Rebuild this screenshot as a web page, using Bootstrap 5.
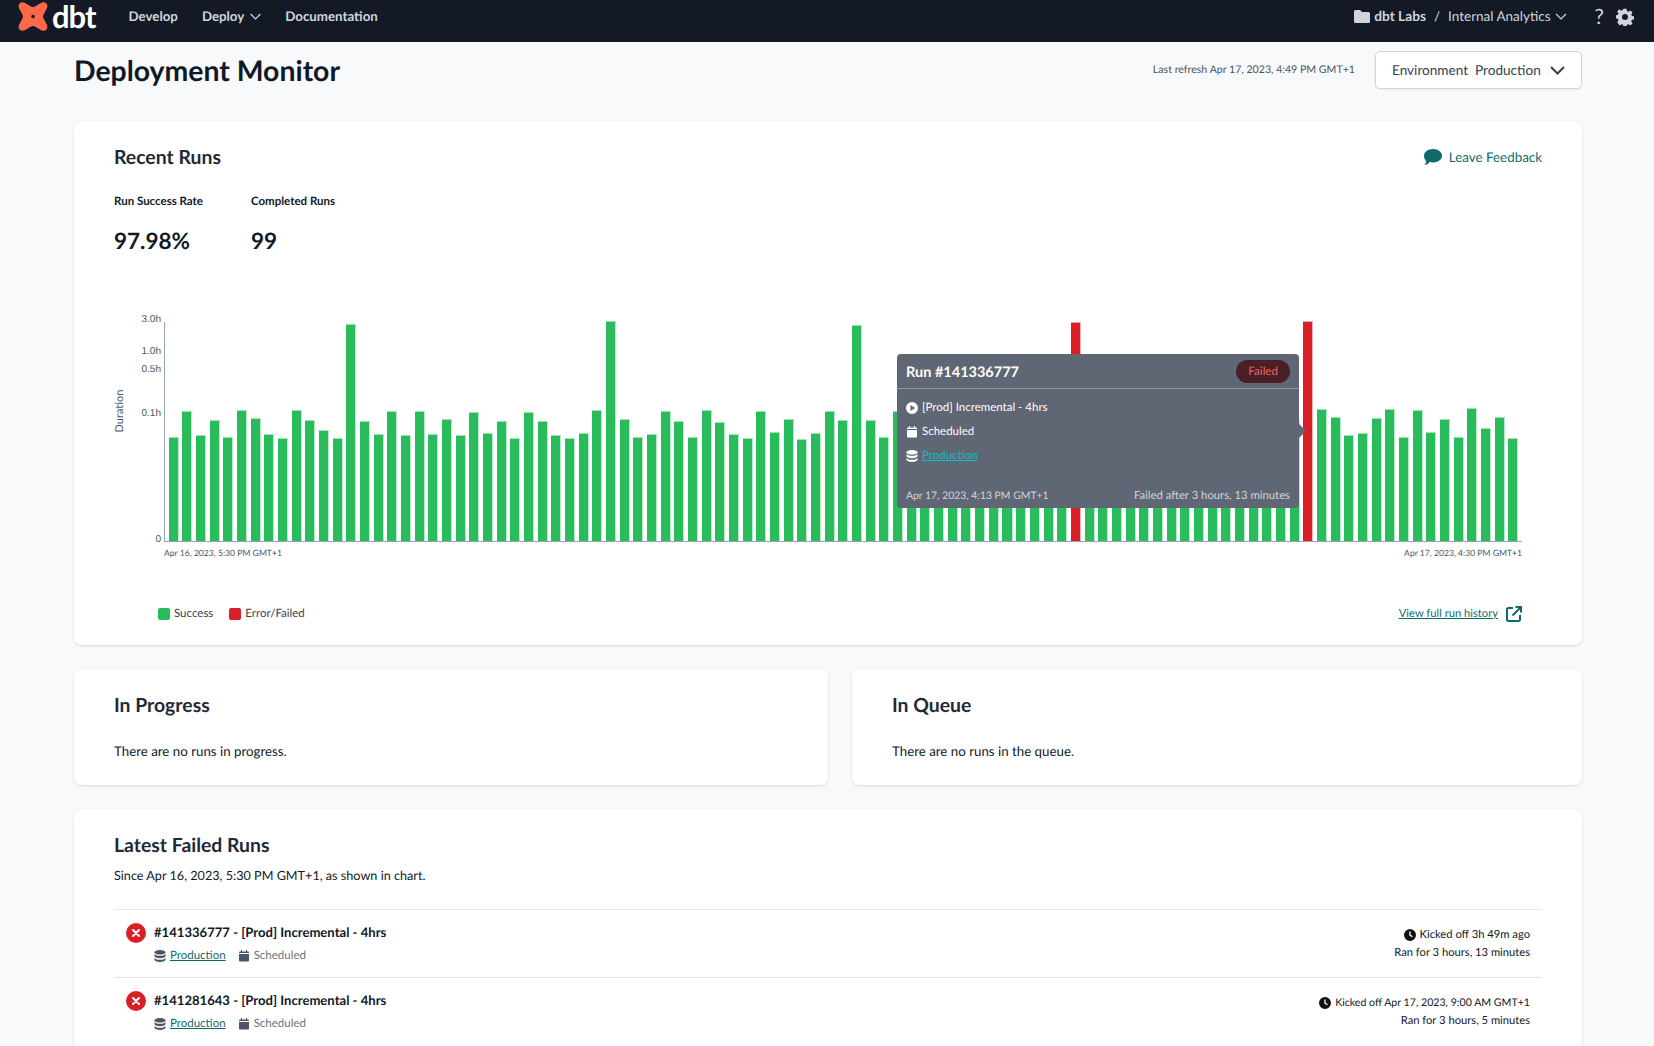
<!DOCTYPE html>
<html lang="en">
<head>
<meta charset="utf-8">
<title>Deployment Monitor</title>
<link href="https://cdn.jsdelivr.net/npm/bootstrap@5.3.0/dist/css/bootstrap.min.css" rel="stylesheet">
<style>
html,body{height:1046px;overflow:hidden}
body{background:#f8f9fb;font-family:"Lato","Liberation Sans",sans-serif;color:#111827;font-size:13.5px;text-rendering:geometricPrecision}
.top-bar{height:42px;background:#131a26;padding:0 20px 9px 17px}
.brand-word{font-size:31px;font-weight:700;color:#fff;line-height:1;letter-spacing:-1px;margin-left:3px}
.top-link{font-size:13.3px;font-weight:700;color:#d1d5db;text-decoration:none;display:inline-flex;align-items:center;gap:6px}
.top-links{margin-left:33px;gap:24px}
.org-name{font-size:13.7px;font-weight:700;color:#d1d5db}
.proj-name{font-size:13.5px;color:#d1d5db}
.help-mark{font-size:21px;line-height:1;color:#d1d5db;margin-left:28px;margin-right:12px}
.page-wrap{padding:0 72px 0 74px}
.head-row{height:56px;margin-bottom:23px}
.page-title{font-size:28.4px;font-weight:700;color:#111827;margin:0;padding-top:3px}
.refresh-note{font-size:10.6px;color:#4b5563;margin-right:20px;padding-top:2px}
.env-select{width:207px;height:38px;background:#fff;border:1px solid #cfd3da;border-radius:5px;padding:0 16px;font-size:13.6px;color:#374151;box-shadow:0 1px 2px rgba(0,0,0,.05)}
.panel{background:#fff;border:0;border-radius:8px;box-shadow:0 1px 3px rgba(17,24,39,.12);padding:0 40px;margin-bottom:24px}
.panel-main{height:524px;padding-top:24px}
.panel-small{height:116px;padding-top:24px}
.panel-fail{height:300px;padding-top:24px;margin-bottom:0}
.panel-title{font-size:19.4px;font-weight:700;color:#1f2937;margin:0;line-height:26px}
.feedback{font-size:13.4px;color:#0f6b6b;text-decoration:none;display:inline-flex;align-items:center;gap:7px;margin-bottom:2px}
.metric-label{font-size:11.5px;font-weight:700;color:#111827;line-height:16px}
.metric-value{font-size:22.5px;font-weight:700;color:#111827;line-height:30px;margin-top:16px}
.metric-one{width:137px}
.metrics{margin-top:23px}
.chart-area{position:relative;height:283px;margin-top:62px}
.y-title{position:absolute;left:-19px;top:86px;font-size:11px;color:#4b5563;transform:rotate(-90deg);width:50px;text-align:center;line-height:14px}
.y-tick{position:absolute;font:10px "Liberation Sans",sans-serif;color:#4b5563;right:1381px;line-height:12px}
.plot{position:absolute;left:50px;top:4px;width:1358px;height:220px;border-left:1px solid #9ca3af;border-bottom:1px solid #9ca3af;padding:0 4px 0 3.5px;gap:3.67px}
.bar-ok,.bar-err{flex:1 1 0;min-width:0;border-top:1px solid #9fe3b5;border-right:1px solid #b4ebc6;background:#2abb5c}
.bar-err{background:#d92027;border-top-color:#eda3a6;border-right-color:#f0b4b6}
.x-tick{position:absolute;top:229px;font-size:8.6px;color:#4b5563;line-height:12px}
.tip-box{position:absolute;left:783px;top:36px;width:402px;height:154px;background:#5f6674;border-radius:4px;color:#fff;padding:0 9px;font-size:11.5px}
.tip-box::after{content:"";position:absolute;right:-7px;top:70px;border-style:solid;border-width:7px 0 7px 7px;border-color:transparent transparent transparent #5f6674}
.tip-head{height:35px;margin:0 -9px;padding:0 9px;border-bottom:1px solid #9096a2}
.tip-run{font-size:14.5px;font-weight:700;padding-top:3px}
.tip-state{background:#4a1f27;color:#f0636a;border-radius:12px;padding:0 12px;font-size:11.6px;line-height:23px;height:23px}
.tip-line{height:24px;gap:4px;font-size:11.5px}
.tip-rows{padding-top:6.5px}
.tip-link{color:#10bfc5}
.tip-foot{position:absolute;left:9px;right:9px;bottom:3px;color:#d1d5db;font-size:11.3px}
.tip-date{font-size:10.4px}
.chart-foot{padding:1px 20px 0 44px;height:24px}
.legend-dot{width:12px;height:12px;border-radius:2px;display:inline-block}
.dot-ok{background:#2abb5c}
.dot-err{background:#d92027}
.legend-item{font-size:11.5px;color:#374151;gap:4px;margin-right:16px}
.hist-link{font-size:11.2px;color:#0f6b6b;padding-top:2px}
.body-text{font-size:13.3px;color:#111827;margin:0}
.small-body{margin-top:22px;line-height:20px}
.fail-sub{margin-top:7px;line-height:20px;font-size:12.65px}
.fail-list{margin-top:22.5px}
.fail-row{height:68.8px;border-top:1px solid #e5e7eb;padding:12px 12px 0 12px}
.fail-name{font-size:13.1px;font-weight:700;color:#111827;line-height:20px}
.fail-meta{font-size:11.5px;color:#6b7280;line-height:16px;margin-top:6px;gap:12px}
.fail-meta a{color:#0f6b6b}
.fail-right{font-size:11.2px;color:#111827;line-height:18px;text-align:right;padding-top:4px}
.fail-date{font-size:10.6px}
.fail-x{width:20px;height:20px;margin-right:8px;margin-top:1px}
.col-wide{width:754px;flex:none}
</style>
</head>
<body>
<nav class="top-bar d-flex align-items-center">
  <svg width="32" height="32" viewBox="0 0 32 32" aria-hidden="true"><path fill="#ff694a" d="M3 2C4.600.8 6.600 1.200 8.600 2.200L14 5.400C15.200 6.100 16.800 6.100 18 5.400L23.400 2.200C25.400 1.200 27.400.8 29 2C30.600 3.600 30.800 5.600 29.800 7.600L26.600 13.400C25.900 14.800 25.900 16.200 26.600 17.600L29.800 23.400C30.800 25.400 30.600 27.400 29 29C27.400 30.200 25.400 29.800 23.400 28.800L18 25.600C16.800 24.900 15.200 24.900 14 25.600L8.600 28.800C6.600 29.800 4.600 30.200 3 29C1.400 27.400 1.200 25.400 2.200 23.400L5.400 17.600C6.100 16.200 6.100 14.800 5.400 13.400L2.200 7.600C1.200 5.600 1.400 3.600 3 2Z"/><circle cx="16" cy="15.500" r="1.800" fill="#131a26"/></svg>
  <span class="brand-word">dbt</span>
  <div class="top-links d-flex align-items-center">
    <a class="top-link" href="#">Develop</a>
    <a class="top-link" href="#">Deploy <svg width="11" height="7" viewBox="0 0 11 7"><path d="M.6 1l4.900 4.900L10.400 1" fill="none" stroke="#d1d5db" stroke-width="1.200"/></svg></a>
    <a class="top-link" href="#">Documentation</a>
  </div>
  <div class="ms-auto d-flex align-items-center">
    <svg width="16" height="13" viewBox="0 0 16 13" class="me-1"><path fill="#d1d5db" d="M1.500 0h4.500l2 2h6.500A1.500 1.500 0 0 1 16 3.500v8A1.500 1.500 0 0 1 14.500 13h-13A1.500 1.500 0 0 1 0 11.500v-10A1.500 1.500 0 0 1 1.500 0z"/></svg>
    <span class="org-name">dbt Labs</span>
    <span class="proj-name mx-2">/</span>
    <span class="proj-name">Internal Analytics</span>
    <svg width="12" height="7" viewBox="0 0 11 7" class="ms-1"><path d="M.6 1l4.900 4.900L10.400 1" fill="none" stroke="#d1d5db" stroke-width="1.200"/></svg>
    <span class="help-mark">?</span>
    <svg width="18" height="18" viewBox="0 0 24 24"><path fill="#d1d5db" d="M10 1h4l.6 3 2 .9 2.600-1.700 2.800 2.800-1.700 2.600.9 2 3 .6v4l-3 .6-.9 2 1.700 2.600-2.800 2.800-2.600-1.700-2 .9-.6 3h-4l-.6-3-2-.9-2.600 1.700L1.600 19l1.700-2.600-.9-2-3-.6v-4l3-.6.9-2L1.600 4.600 4.400 1.800 7 3.500l2-.9zM12 8a4 4 0 1 0 0 8 4 4 0 0 0 0-8z"/></svg>
  </div>
</nav>
<main class="page-wrap">
  <div class="head-row d-flex align-items-center">
    <h1 class="page-title">Deployment Monitor</h1>
    <span class="refresh-note ms-auto">Last refresh Apr 17, 2023, 4:49 PM GMT+1</span>
    <div class="env-select d-flex align-items-center justify-content-between">
      <span>Environment&nbsp; Production</span>
      <svg width="15" height="9" viewBox="0 0 15 9"><path d="M1 1l6.500 6.500L14 1" fill="none" stroke="#374151" stroke-width="2"/></svg>
    </div>
  </div>
  <section class="panel panel-main">
    <div class="d-flex justify-content-between align-items-center">
      <h2 class="panel-title">Recent Runs</h2>
      <a class="feedback" href="#"><svg width="18" height="16" viewBox="0 0 18 16"><path fill="#0f6b6b" d="M9 0c5 0 9 2.900 9 6.700s-4 6.700-9 6.700c-1.200 0-2.300-.2-3.400-.5C4.400 14.500 2.400 16 .4 16c.9-1 1.700-2.300 1.800-4C.8 10.800 0 8.800 0 6.700 0 2.900 4 0 9 0z"/></svg>Leave Feedback</a>
    </div>
    <div class="metrics d-flex">
      <div class="metric-one"><div class="metric-label">Run Success Rate</div><div class="metric-value">97.98%</div></div>
      <div><div class="metric-label">Completed Runs</div><div class="metric-value">99</div></div>
    </div>
    <div class="chart-area">
      <div class="y-title">Duration</div>
      <div class="y-tick" style="top:-4px">3.0h</div>
      <div class="y-tick" style="top:28px">1.0h</div>
      <div class="y-tick" style="top:46px">0.5h</div>
      <div class="y-tick" style="top:90px">0.1h</div>
      <div class="y-tick" style="top:216px">0</div>
      <div class="plot d-flex align-items-end">
<i class="bar-ok" style="height:104.3px"></i><i class="bar-ok" style="height:129.7px"></i><i class="bar-ok" style="height:106px"></i><i class="bar-ok" style="height:121px"></i><i class="bar-ok" style="height:103.7px"></i><i class="bar-ok" style="height:131px"></i><i class="bar-ok" style="height:123.3px"></i><i class="bar-ok" style="height:107px"></i><i class="bar-ok" style="height:103px"></i><i class="bar-ok" style="height:131px"></i>
<i class="bar-ok" style="height:121.3px"></i><i class="bar-ok" style="height:111px"></i><i class="bar-ok" style="height:102.7px"></i><i class="bar-ok" style="height:216.7px"></i><i class="bar-ok" style="height:120.3px"></i><i class="bar-ok" style="height:107px"></i><i class="bar-ok" style="height:130px"></i><i class="bar-ok" style="height:106px"></i><i class="bar-ok" style="height:130px"></i><i class="bar-ok" style="height:107px"></i>
<i class="bar-ok" style="height:121.7px"></i><i class="bar-ok" style="height:106px"></i><i class="bar-ok" style="height:129px"></i><i class="bar-ok" style="height:108.3px"></i><i class="bar-ok" style="height:120px"></i><i class="bar-ok" style="height:103px"></i><i class="bar-ok" style="height:128.7px"></i><i class="bar-ok" style="height:120.3px"></i><i class="bar-ok" style="height:106.3px"></i><i class="bar-ok" style="height:103.3px"></i>
<i class="bar-ok" style="height:107.7px"></i><i class="bar-ok" style="height:130.7px"></i><i class="bar-ok" style="height:220px"></i><i class="bar-ok" style="height:121.7px"></i><i class="bar-ok" style="height:104px"></i><i class="bar-ok" style="height:106.7px"></i><i class="bar-ok" style="height:130px"></i><i class="bar-ok" style="height:119.7px"></i><i class="bar-ok" style="height:104px"></i><i class="bar-ok" style="height:131px"></i>
<i class="bar-ok" style="height:119px"></i><i class="bar-ok" style="height:106.7px"></i><i class="bar-ok" style="height:103px"></i><i class="bar-ok" style="height:130px"></i><i class="bar-ok" style="height:109.3px"></i><i class="bar-ok" style="height:122px"></i><i class="bar-ok" style="height:102px"></i><i class="bar-ok" style="height:108px"></i><i class="bar-ok" style="height:130px"></i><i class="bar-ok" style="height:120.7px"></i>
<i class="bar-ok" style="height:216px"></i><i class="bar-ok" style="height:120.7px"></i><i class="bar-ok" style="height:103.7px"></i><i class="bar-ok" style="height:130.3px"></i><i class="bar-ok" style="height:110px"></i><i class="bar-ok" style="height:106px"></i><i class="bar-ok" style="height:120px"></i><i class="bar-ok" style="height:104px"></i><i class="bar-ok" style="height:125px"></i><i class="bar-ok" style="height:108px"></i>
<i class="bar-ok" style="height:112px"></i><i class="bar-ok" style="height:106px"></i><i class="bar-ok" style="height:118px"></i><i class="bar-ok" style="height:104px"></i><i class="bar-ok" style="height:128px"></i><i class="bar-ok" style="height:110px"></i><i class="bar-err" style="height:219px"></i><i class="bar-ok" style="height:107px"></i><i class="bar-ok" style="height:122px"></i><i class="bar-ok" style="height:105px"></i>
<i class="bar-ok" style="height:130px"></i><i class="bar-ok" style="height:109px"></i><i class="bar-ok" style="height:120px"></i><i class="bar-ok" style="height:104px"></i><i class="bar-ok" style="height:127px"></i><i class="bar-ok" style="height:111px"></i><i class="bar-ok" style="height:106px"></i><i class="bar-ok" style="height:124px"></i><i class="bar-ok" style="height:103px"></i><i class="bar-ok" style="height:118px"></i>
<i class="bar-ok" style="height:130px"></i><i class="bar-ok" style="height:108px"></i><i class="bar-ok" style="height:121px"></i><i class="bar-err" style="height:220px"></i><i class="bar-ok" style="height:132px"></i><i class="bar-ok" style="height:124px"></i><i class="bar-ok" style="height:106px"></i><i class="bar-ok" style="height:108.3px"></i><i class="bar-ok" style="height:123px"></i><i class="bar-ok" style="height:131.7px"></i>
<i class="bar-ok" style="height:104px"></i><i class="bar-ok" style="height:131px"></i><i class="bar-ok" style="height:108.7px"></i><i class="bar-ok" style="height:122px"></i><i class="bar-ok" style="height:104px"></i><i class="bar-ok" style="height:132.7px"></i><i class="bar-ok" style="height:113px"></i><i class="bar-ok" style="height:123.7px"></i><i class="bar-ok" style="height:103.3px"></i>
      </div>
      <div class="x-tick" style="left:50px">Apr 16, 2023, 5:30 PM GMT+1</div>
      <div class="x-tick" style="right:20px">Apr 17, 2023, 4:30 PM GMT+1</div>
      <div class="tip-box">
        <div class="tip-head d-flex align-items-center justify-content-between"><span class="tip-run">Run #141336777</span><span class="tip-state">Failed</span></div>
        <div class="tip-rows">
          <div class="tip-line d-flex align-items-center"><svg width="12" height="12" viewBox="0 0 12 12"><path fill="#fff" fill-rule="evenodd" d="M6 0a6 6 0 1 1 0 12A6 6 0 0 1 6 0zM4.500 3v6L9 6z"/></svg>[Prod] Incremental - 4hrs</div>
          <div class="tip-line d-flex align-items-center"><svg width="12" height="12" viewBox="0 0 12 12"><path fill="#fff" d="M1 4h10v6.500a1 1 0 0 1-1 1H2a1 1 0 0 1-1-1zM3 0h1v1.500h4V0h1v1.500h1a1 1 0 0 1 1 1V3H1v-.5a1 1 0 0 1 1-1h1z"/></svg>Scheduled</div>
          <div class="tip-line d-flex align-items-center"><svg width="12" height="12" viewBox="0 0 12 12"><g fill="#fff"><ellipse cx="6" cy="2.300" rx="5.500" ry="2.300"/><path d="M.5 4c1 1.300 3 1.800 5.500 1.800S10.500 5.300 11.500 4v2c0 1.300-2.500 2.200-5.500 2.200S.5 7.300.5 6z"/><path d="M.5 8c1 1.300 3 1.800 5.500 1.800S10.500 9.300 11.500 8v1.800C11.500 11 9 12 6 12S.5 11 .5 9.800z"/></g></svg><a class="tip-link" href="#">Production</a></div>
        </div>
        <div class="tip-foot d-flex justify-content-between align-items-center"><span class="tip-date">Apr 17, 2023, 4:13 PM GMT+1</span><span>Failed after 3 hours, 13 minutes</span></div>
      </div>
    </div>
    <div class="chart-foot d-flex align-items-center">
      <span class="legend-item d-inline-flex align-items-center"><i class="legend-dot dot-ok"></i>Success</span>
      <span class="legend-item d-inline-flex align-items-center"><i class="legend-dot dot-err"></i>Error/Failed</span>
      <a class="hist-link ms-auto" href="#">View full run history</a>
      <svg width="16" height="16" viewBox="0 0 16 16" class="ms-2"><path fill="none" stroke="#0f6b6b" stroke-width="2" d="M7 2H2.500A1.500 1.500 0 0 0 1 3.500v10A1.500 1.500 0 0 0 2.500 15h10a1.500 1.500 0 0 0 1.500-1.500V9M6.500 9.500L15 1M9.500 1H15v5.500"/></svg>
    </div>
  </section>
  <div class="d-flex gap-4">
    <div class="col-wide"><section class="panel panel-small"><h2 class="panel-title">In Progress</h2><p class="body-text small-body">There are no runs in progress.</p></section></div>
    <div class="flex-grow-1"><section class="panel panel-small"><h2 class="panel-title">In Queue</h2><p class="body-text small-body">There are no runs in the queue.</p></section></div>
  </div>
  <section class="panel panel-fail">
    <h2 class="panel-title">Latest Failed Runs</h2>
    <p class="body-text fail-sub">Since Apr 16, 2023, 5:30 PM GMT+1, as shown in chart.</p>
    <div class="fail-list">
      <div class="fail-row d-flex">
        <svg class="fail-x" viewBox="0 0 20 20"><circle cx="10" cy="10" r="10" fill="#d92027"/><path d="M7 7l6 6M13 7l-6 6" stroke="#fff" stroke-width="2" stroke-linecap="round"/></svg>
        <div><div class="fail-name">#141336777 - [Prod] Incremental - 4hrs</div>
          <div class="fail-meta d-flex align-items-center"><span class="d-inline-flex align-items-center gap-1"><svg width="12" height="12" viewBox="0 0 12 12"><g fill="#4b5563"><ellipse cx="6" cy="2.300" rx="5.500" ry="2.300"/><path d="M.5 4c1 1.300 3 1.800 5.500 1.800S10.500 5.300 11.500 4v2c0 1.300-2.500 2.200-5.500 2.200S.5 7.300.5 6z"/><path d="M.5 8c1 1.300 3 1.800 5.500 1.800S10.500 9.300 11.500 8v1.800C11.500 11 9 12 6 12S.5 11 .5 9.800z"/></g></svg><a href="#">Production</a></span><span class="d-inline-flex align-items-center gap-1"><svg width="12" height="12" viewBox="0 0 12 12"><path fill="#4b5563" d="M1 4h10v6.500a1 1 0 0 1-1 1H2a1 1 0 0 1-1-1zM3 0h1v1.500h4V0h1v1.500h1a1 1 0 0 1 1 1V3H1v-.5a1 1 0 0 1 1-1h1z"/></svg>Scheduled</span></div></div>
        <div class="fail-right ms-auto"><div class="d-flex align-items-center justify-content-end gap-1"><svg width="12" height="12" viewBox="0 0 12 12"><path fill="#111" fill-rule="evenodd" d="M6 0a6 6 0 1 1 0 12A6 6 0 0 1 6 0zM5.300 2.500v4l2.800 1.800.7-1-2.200-1.500V2.500z"/></svg>Kicked off 3h 49m ago</div><div>Ran for 3 hours, 13 minutes</div></div>
      </div>
      <div class="fail-row d-flex">
        <svg class="fail-x" viewBox="0 0 20 20"><circle cx="10" cy="10" r="10" fill="#d92027"/><path d="M7 7l6 6M13 7l-6 6" stroke="#fff" stroke-width="2" stroke-linecap="round"/></svg>
        <div><div class="fail-name">#141281643 - [Prod] Incremental - 4hrs</div>
          <div class="fail-meta d-flex align-items-center"><span class="d-inline-flex align-items-center gap-1"><svg width="12" height="12" viewBox="0 0 12 12"><g fill="#4b5563"><ellipse cx="6" cy="2.300" rx="5.500" ry="2.300"/><path d="M.5 4c1 1.300 3 1.800 5.500 1.800S10.500 5.300 11.500 4v2c0 1.300-2.500 2.200-5.500 2.200S.5 7.300.5 6z"/><path d="M.5 8c1 1.300 3 1.800 5.500 1.800S10.500 9.300 11.500 8v1.800C11.500 11 9 12 6 12S.5 11 .5 9.800z"/></g></svg><a href="#">Production</a></span><span class="d-inline-flex align-items-center gap-1"><svg width="12" height="12" viewBox="0 0 12 12"><path fill="#4b5563" d="M1 4h10v6.500a1 1 0 0 1-1 1H2a1 1 0 0 1-1-1zM3 0h1v1.500h4V0h1v1.500h1a1 1 0 0 1 1 1V3H1v-.5a1 1 0 0 1 1-1h1z"/></svg>Scheduled</span></div></div>
        <div class="fail-right ms-auto"><div class="d-flex align-items-center justify-content-end gap-1 fail-date"><svg width="12" height="12" viewBox="0 0 12 12"><path fill="#111" fill-rule="evenodd" d="M6 0a6 6 0 1 1 0 12A6 6 0 0 1 6 0zM5.300 2.500v4l2.800 1.800.7-1-2.200-1.500V2.500z"/></svg>Kicked off Apr 17, 2023, 9:00 AM GMT+1</div><div>Ran for 3 hours, 5 minutes</div></div>
      </div>
    </div>
  </section>
</main>
</body>
</html>
